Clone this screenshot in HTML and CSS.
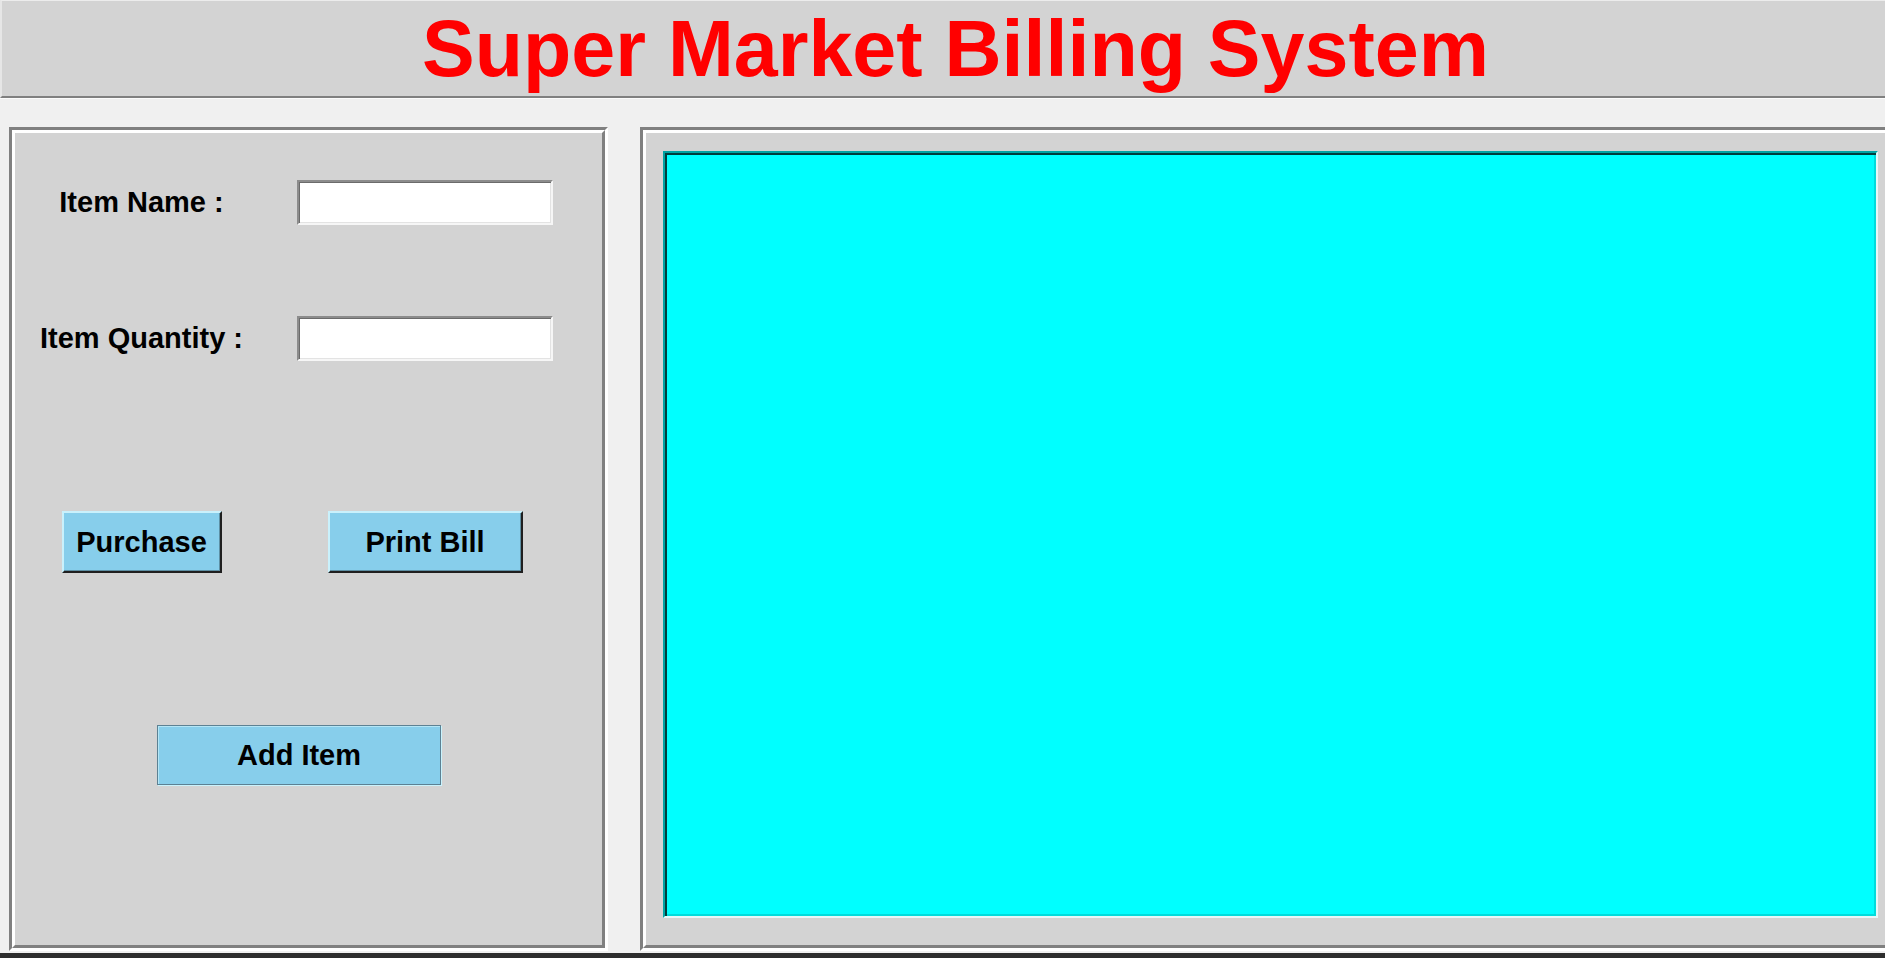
FILE: index.html
```html
<!DOCTYPE html>
<html lang="en">
<head>
<meta charset="utf-8">
<title>Super Market Billing System</title>
<link rel="stylesheet" href="styles.css">
</head>
<body>
<div class="app">
  <header class="title-bar">
    <h1 class="title">Super Market Billing System</h1>
  </header>
  <main class="main">
    <section class="panel panel-left">
      <div class="panel-inner form">
        <div class="form-row">
          <label class="field-label" for="item-name">Item Name :</label>
          <input class="field-input" id="item-name" type="text">
        </div>
        <div class="form-row row-qty">
          <label class="field-label" for="item-qty">Item Quantity :</label>
          <input class="field-input" id="item-qty" type="text">
        </div>
        <div class="form-row row-actions">
          <button class="btn btn-purchase" type="button">Purchase</button>
          <button class="btn btn-print" type="button">Print Bill</button>
        </div>
        <div class="form-row row-add">
          <button class="btn btn-add" type="button">Add Item</button>
        </div>
      </div>
    </section>
    <section class="panel panel-right">
      <div class="panel-inner bill-wrap">
        <div class="bill"></div>
      </div>
    </section>
  </main>
  <div class="screen-edge"></div>
</div>
</body>
</html>
```

FILE: styles.css
```css
html, body {
  margin: 0;
  padding: 0;
  overflow: hidden;
  background: #f0f0f0;
}

.app {
  width: 1909px;
  height: 958px;
  display: flex;
  flex-direction: column;
  font-family: "Liberation Sans", Arial, sans-serif;
}

.title-bar {
  flex: none;
  height: 98px;
  box-sizing: border-box;
  background: #d3d3d3;
  border-top: 1px solid #ececec;
  border-left: 2px solid #e6e6e6;
  border-bottom: 2px solid #808080;
  box-shadow: 0 1px 0 #fbfbfb;
  text-align: center;
}

.title {
  margin: 8px 0 0;
  font-size: 79px;
  line-height: 80px;
  font-weight: bold;
  color: #ff0000;
}

.main {
  flex: 1;
  min-height: 0;
  display: flex;
  gap: 32px;
  padding: 29px 0 2px 9px;
  box-sizing: border-box;
}

.panel {
  box-sizing: border-box;
  border: 3px solid;
  border-color: #808080 #ffffff #ffffff #808080;
}

.panel-left {
  width: 599px;
}

.panel-right {
  width: 1260px;
}

.panel-inner {
  height: 100%;
  box-sizing: border-box;
  border: 3px solid;
  border-color: #ffffff #808080 #808080 #ffffff;
  background: #d3d3d3;
}

.form {
  display: flex;
  flex-direction: column;
  padding-top: 47px;
}

.form-row {
  display: grid;
  grid-template-columns: 253px 256px;
  column-gap: 29px;
  align-items: center;
}

.row-qty {
  margin-top: 91px;
}

.row-actions {
  margin-top: 150px;
}

.row-add {
  margin-top: 152px;
}

.field-label {
  text-align: center;
  font-size: 29px;
  font-weight: bold;
  color: #000;
}

.field-input {
  width: 256px;
  height: 45px;
  box-sizing: border-box;
  margin: 0;
  padding: 0 4px;
  background: #ffffff;
  border: 2px solid;
  border-color: #8c8c8c #f6f6f6 #f6f6f6 #8c8c8c;
  box-shadow: inset 1px 1px 0 #6b6b6b, inset -1px -1px 0 #e3e3e3;
  font-family: "Liberation Sans", Arial, sans-serif;
  font-size: 20px;
  outline: none;
}

.btn {
  height: 62px;
  margin: 0;
  padding: 0;
  justify-self: center;
  box-sizing: border-box;
  background: #87ceeb;
  color: #000;
  font-family: "Liberation Sans", Arial, sans-serif;
  font-size: 29px;
  font-weight: bold;
  line-height: 1;
  border: 2px solid;
  border-color: #c9f1fc #1f1f1f #1f1f1f #c9f1fc;
  box-shadow: inset -1px -1px 0 #5d8fa3;
}

.btn-purchase {
  width: 160px;
}

.btn-print {
  width: 195px;
}

.btn-add {
  grid-column: 1 / 3;
  justify-self: start;
  margin-left: 142px;
  width: 284px;
  height: 60px;
  border: 1px solid #5c8193;
  box-shadow: 1px 1px 0 #c9f3fd, inset 1px 1px 0 #b4e6f6;
}

.bill-wrap {
  padding: 18px 16px 27px 17px;
}

.bill {
  height: 100%;
  box-sizing: border-box;
  background: #00ffff;
  border: 2px solid;
  border-color: #00a3a3 #e6f8f8 #e6f8f8 #00a3a3;
  box-shadow: inset 2px 2px 0 #003d3d, inset -2px -2px 0 #00dcdc;
}

.screen-edge {
  flex: none;
  height: 5px;
  background: #2d2d2d;
}
```
